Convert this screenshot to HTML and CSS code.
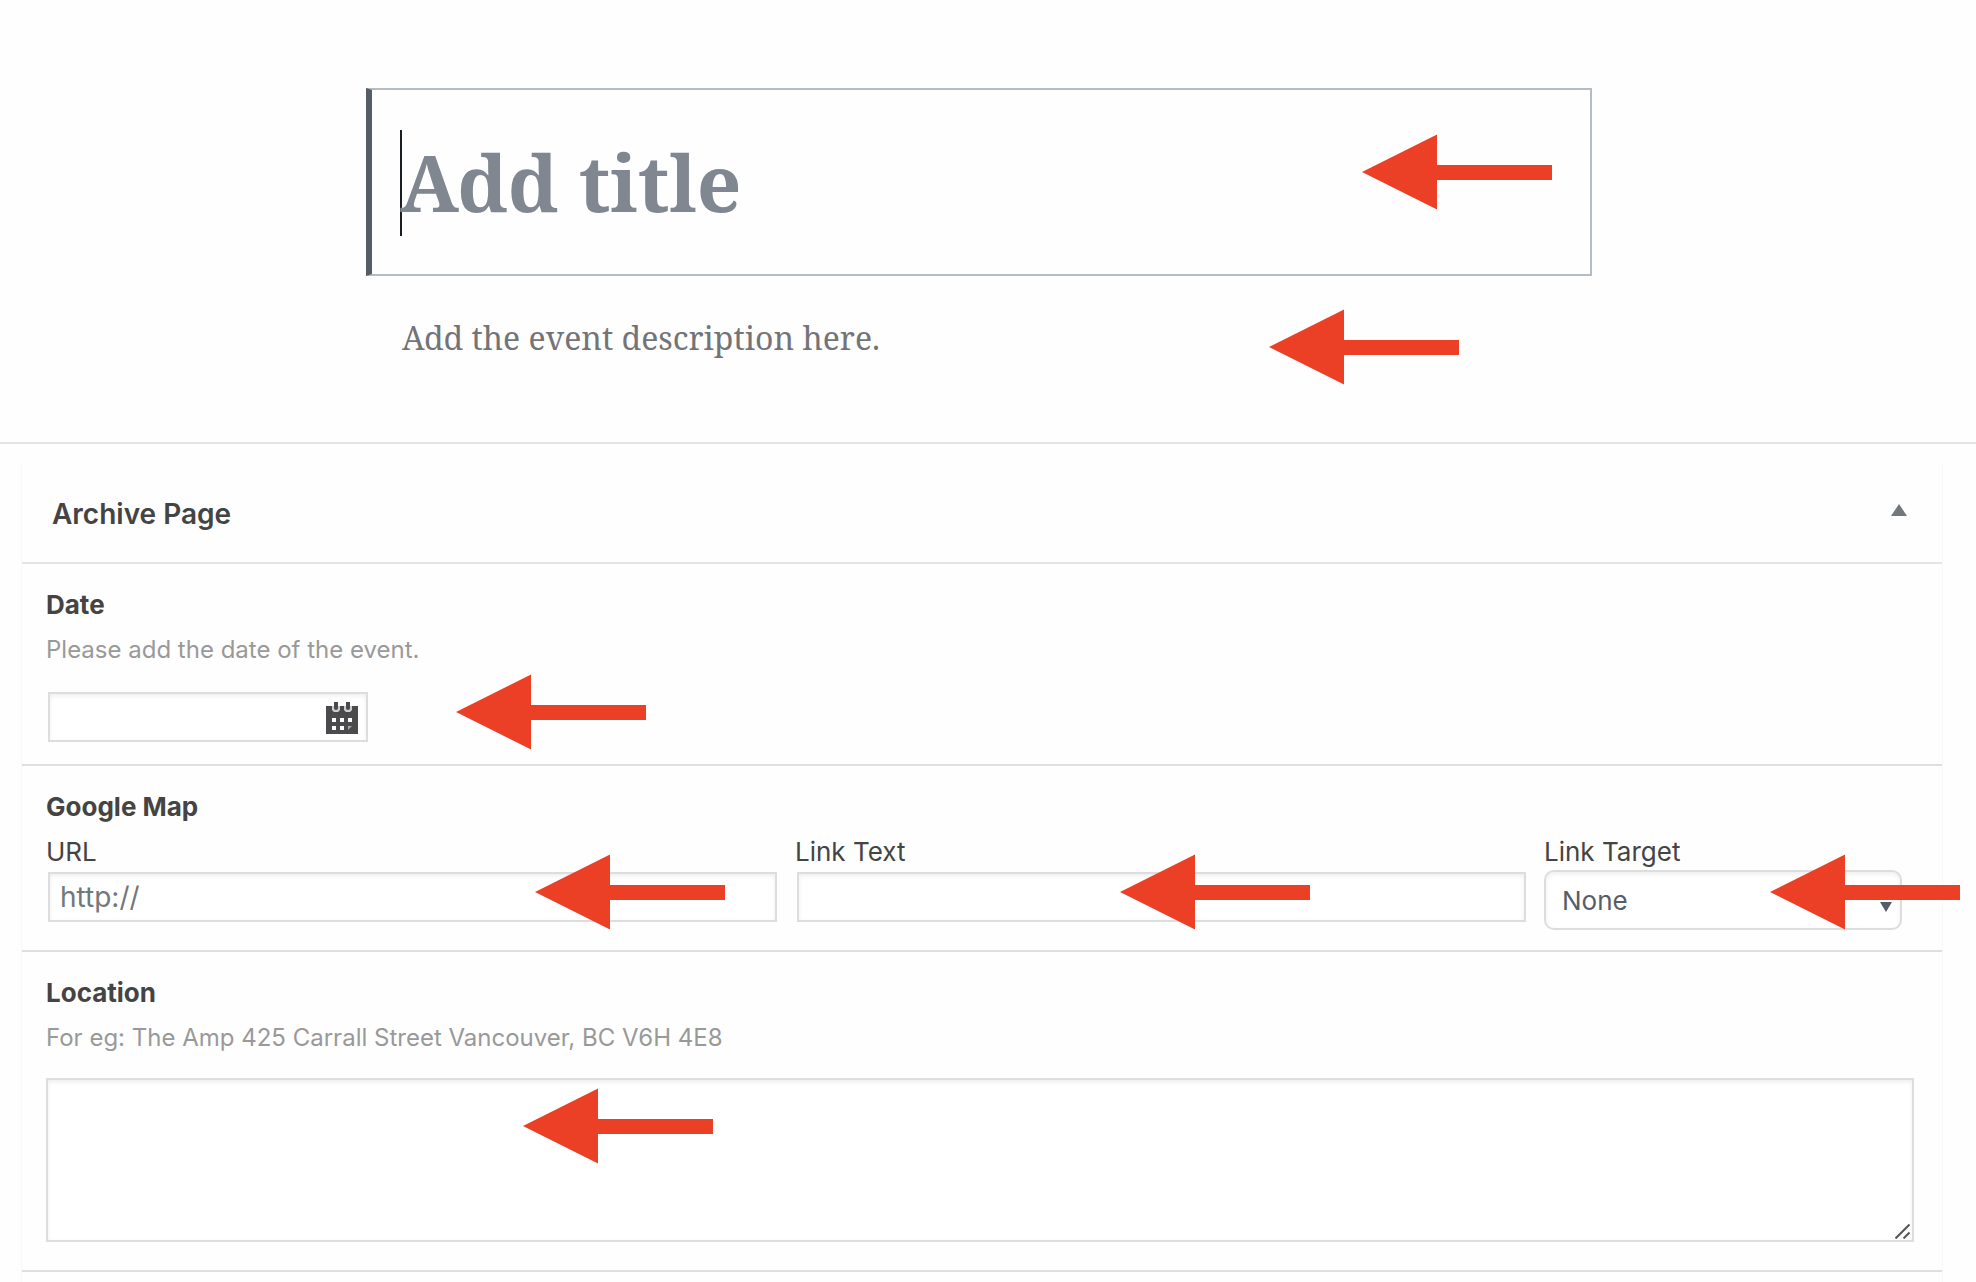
FILE: index.html
```html
<!DOCTYPE html>
<html lang="en">
<head>
<meta charset="utf-8">
<meta name="viewport" content="width=device-width, initial-scale=1">
<title>Add title</title>
<link rel="stylesheet" href="styles.css">
</head>
<body>
<svg class="sprite" aria-hidden="true">
  <symbol id="arrow" viewBox="0 0 190 76"><path d="M0 38 75 0.500V31H190V46H75V75.500Z"/></symbol>
</svg>
<main>
  <section class="writing">
    <div class="title-block">
      <span class="caret"></span>
      <input class="title-input" type="text" placeholder="Add title" aria-label="Add title">
      <svg class="arrow arrow-title" aria-hidden="true"><use href="#arrow"/></svg>
    </div>
    <div class="description-block">
      <input class="description-input" type="text" placeholder="Add the event description here." aria-label="Event description">
      <svg class="arrow arrow-description" aria-hidden="true"><use href="#arrow"/></svg>
    </div>
  </section>
  <section class="metaboxes">
    <div class="panel">
      <header class="panel-header">
        <h2>Archive Page</h2>
        <button class="toggle" type="button" aria-label="Toggle panel">
          <svg width="16" height="12" viewBox="0 0 16 12" aria-hidden="true"><path d="M8 0 16 12H0Z"/></svg>
        </button>
      </header>
      <div class="field">
        <label class="field-title" for="date">Date</label>
        <p class="hint">Please add the date of the event.</p>
        <div class="date-box">
          <input class="text-input" id="date" type="text">
          <svg class="calendar" width="32" height="32" viewBox="0 0 32 32" aria-hidden="true">
            <path fill="#4b4b4d" d="M0 4H6V6A4 4 0 0 0 14 6V4H18V6A4 4 0 0 0 26 6V4H32V32H0Z"/>
            <path fill="#ccc" d="M6 4H14V6A4 4 0 0 1 6 6ZM18 4H26V6A4 4 0 0 1 18 6Z"/>
            <path fill="#4b4b4d" d="M8 0H12V6A2 2 0 0 1 8 6ZM20 0H24V6A2 2 0 0 1 20 6Z"/>
            <path fill="#fff" d="M6 16H10V20H6ZM14 16H18V20H14ZM22 16H26V20H22ZM6 24H10V28H6ZM14 24H18V28H14Z"/>
            <path fill="#a5a5a6" d="M22 24H26L22 28Z"/>
          </svg>
        </div>
        <svg class="arrow arrow-date" aria-hidden="true"><use href="#arrow"/></svg>
      </div>
      <div class="field field-map">
        <h3 class="field-title">Google Map</h3>
        <div class="link-grid">
          <div class="link-cell">
            <label for="url">URL</label>
            <input class="text-input" id="url" type="text" placeholder="http://">
          </div>
          <div class="link-cell">
            <label for="text">Link Text</label>
            <input class="text-input" id="text" type="text">
          </div>
          <div class="link-cell">
            <label for="target">Link Target</label>
            <div class="select-box">
              <select id="target"><option>None</option><option>New Window</option></select>
              <svg class="select-mark" width="12" height="10" viewBox="0 0 12 10" aria-hidden="true"><path d="M0 0H12L6 10Z"/></svg>
            </div>
          </div>
        </div>
        <svg class="arrow arrow-url" aria-hidden="true"><use href="#arrow"/></svg>
        <svg class="arrow arrow-text" aria-hidden="true"><use href="#arrow"/></svg>
        <svg class="arrow arrow-target" aria-hidden="true"><use href="#arrow"/></svg>
      </div>
      <div class="field field-location">
        <label class="field-title" for="location">Location</label>
        <p class="hint">For eg: The Amp 425 Carrall Street Vancouver, BC V6H 4E8</p>
        <div class="area-box">
          <textarea id="location"></textarea>
          <svg class="grip" width="15" height="15" viewBox="0 0 15 15" aria-hidden="true"><path d="M0.500 14.500 14.500 0.500M8.500 14.500 14.500 8.500"/></svg>
        </div>
        <svg class="arrow arrow-location" aria-hidden="true"><use href="#arrow"/></svg>
      </div>
    </div>
  </section>
</main>
</body>
</html>
```
FILE: styles.css
```css
* { box-sizing: border-box; }

body {
  margin: 0;
  background: #fefefe;
  color: #444;
  font-family: Inter, "Liberation Sans", sans-serif;
  font-size: 26px;
  line-height: 36px;
}

h2, h3, p { margin: 0; }

input, select, textarea { font-family: inherit; outline: 0; }

.sprite { position: absolute; width: 0; height: 0; }

/* Annotation arrows lie over the form */
.arrow {
  position: absolute;
  width: 190px;
  height: 76px;
  fill: #eb4025;
  pointer-events: none;
}

/* Title and description */
.writing {
  padding: 88px 18px 80px 0;
  border-bottom: 2px solid #e2e4e7;
}

.title-block, .description-block {
  position: relative;
  max-width: 1226px;
  margin: 0 auto;
}

.title-block {
  display: flex;
  align-items: center;
  height: 188px;
  padding: 0 28px;
  border: 2px solid #b5bcc2;
  border-left: 6px solid #555d66;
}

/* The insertion point sits on the first letter's edge */
.caret { width: 2px; height: 106px; margin: 2px -2px 0 0; background: #191e23; }

.title-input, .description-input {
  flex: 1;
  min-width: 0;
  padding: 0;
  border: 0;
  background: transparent;
  font-family: "Noto Serif", "Droid Serif", "DejaVu Serif Condensed", "DejaVu Serif", serif;
}

.title-input { height: 120px; font-size: 78px; font-weight: 700; }
.title-input::placeholder { color: #808790; opacity: 1; }

.description-block { display: flex; margin-top: 36px; padding: 0 36px; }
.description-input { height: 50px; font-size: 32px; }
.description-input::placeholder { color: #737477; opacity: 1; }

.arrow-title { right: 38px; top: 44px; }
.arrow-description { right: 133px; top: -3px; }

/* Panel */
.metaboxes { padding: 20px 34px 0 22px; }

.panel { box-shadow: -1px 0 #f8f8f8, 1px 0 #f8f8f8; padding-bottom: 10px; }

.panel-header {
  display: flex;
  align-items: center;
  justify-content: space-between;
  height: 100px;
  padding: 2px 27px 0 30px;
  border-bottom: 2px solid #e2e4e7;
}

.panel-header h2 { font-size: 28px; font-weight: 600; }

.toggle {
  display: flex;
  padding: 8px;
  margin-bottom: 8px;
  border: 0;
  background: none;
  fill: #72777c;
}

.field {
  position: relative;
  padding: 23px 28px 22px 24px;
  border-bottom: 2px solid #dfdfdf;
}

.field-title { display: block; font-size: 26px; font-weight: 700; line-height: 36px; }

.hint { margin-top: 11px; color: #999; font-size: 24px; line-height: 32px; }

.text-input {
  display: block;
  width: 100%;
  height: 50px;
  padding: 0 10px;
  border: 2px solid #ddd;
  background: #fff;
  box-shadow: inset 0 2px 4px rgba(0, 0, 0, 0.07);
  color: #32373c;
  font-size: 28px;
}

.text-input::placeholder { color: #72777c; opacity: 1; }

.date-box { position: relative; width: 320px; margin: 26px 0 0 2px; }
.calendar { position: absolute; right: 10px; top: 10px; }
.arrow-date { left: 434px; top: 110px; }

.field-map { padding-right: 40px; padding-bottom: 20px; }

.link-grid {
  display: grid;
  grid-template-columns: 1fr 1fr 358px;
  gap: 18px;
  margin-top: 9px;
}

.link-cell { display: flex; flex-direction: column; }
.link-cell .text-input { width: auto; margin: 2px 0 0 2px; }

.select-box { position: relative; }

.select-box select {
  display: block;
  width: 100%;
  height: 60px;
  padding: 0 16px;
  border: 2px solid #ddd;
  border-radius: 10px;
  background: #fff;
  box-shadow: inset 0 2px 4px rgba(0, 0, 0, 0.07);
  color: #555d66;
  font-size: 26px;
  appearance: none;
}

.select-mark { position: absolute; right: 10px; top: 32px; fill: #555d66; }

.arrow-url, .arrow-text, .arrow-target { top: 88px; }
.arrow-url { left: 513px; }
.arrow-text { left: 1098px; }
.arrow-target { right: -18px; }

.field-location { padding-bottom: 28px; }
.area-box { position: relative; margin-top: 24px; }

textarea {
  display: block;
  width: 100%;
  height: 164px;
  padding: 8px 10px;
  border: 2px solid #ddd;
  background: #fff;
  box-shadow: inset 0 2px 4px rgba(0, 0, 0, 0.07);
  font-size: 28px;
  resize: none;
}

.grip { position: absolute; right: 4px; bottom: 3px; fill: none; stroke: #555; stroke-width: 2; }
.arrow-location { left: 501px; top: 136px; }
```
